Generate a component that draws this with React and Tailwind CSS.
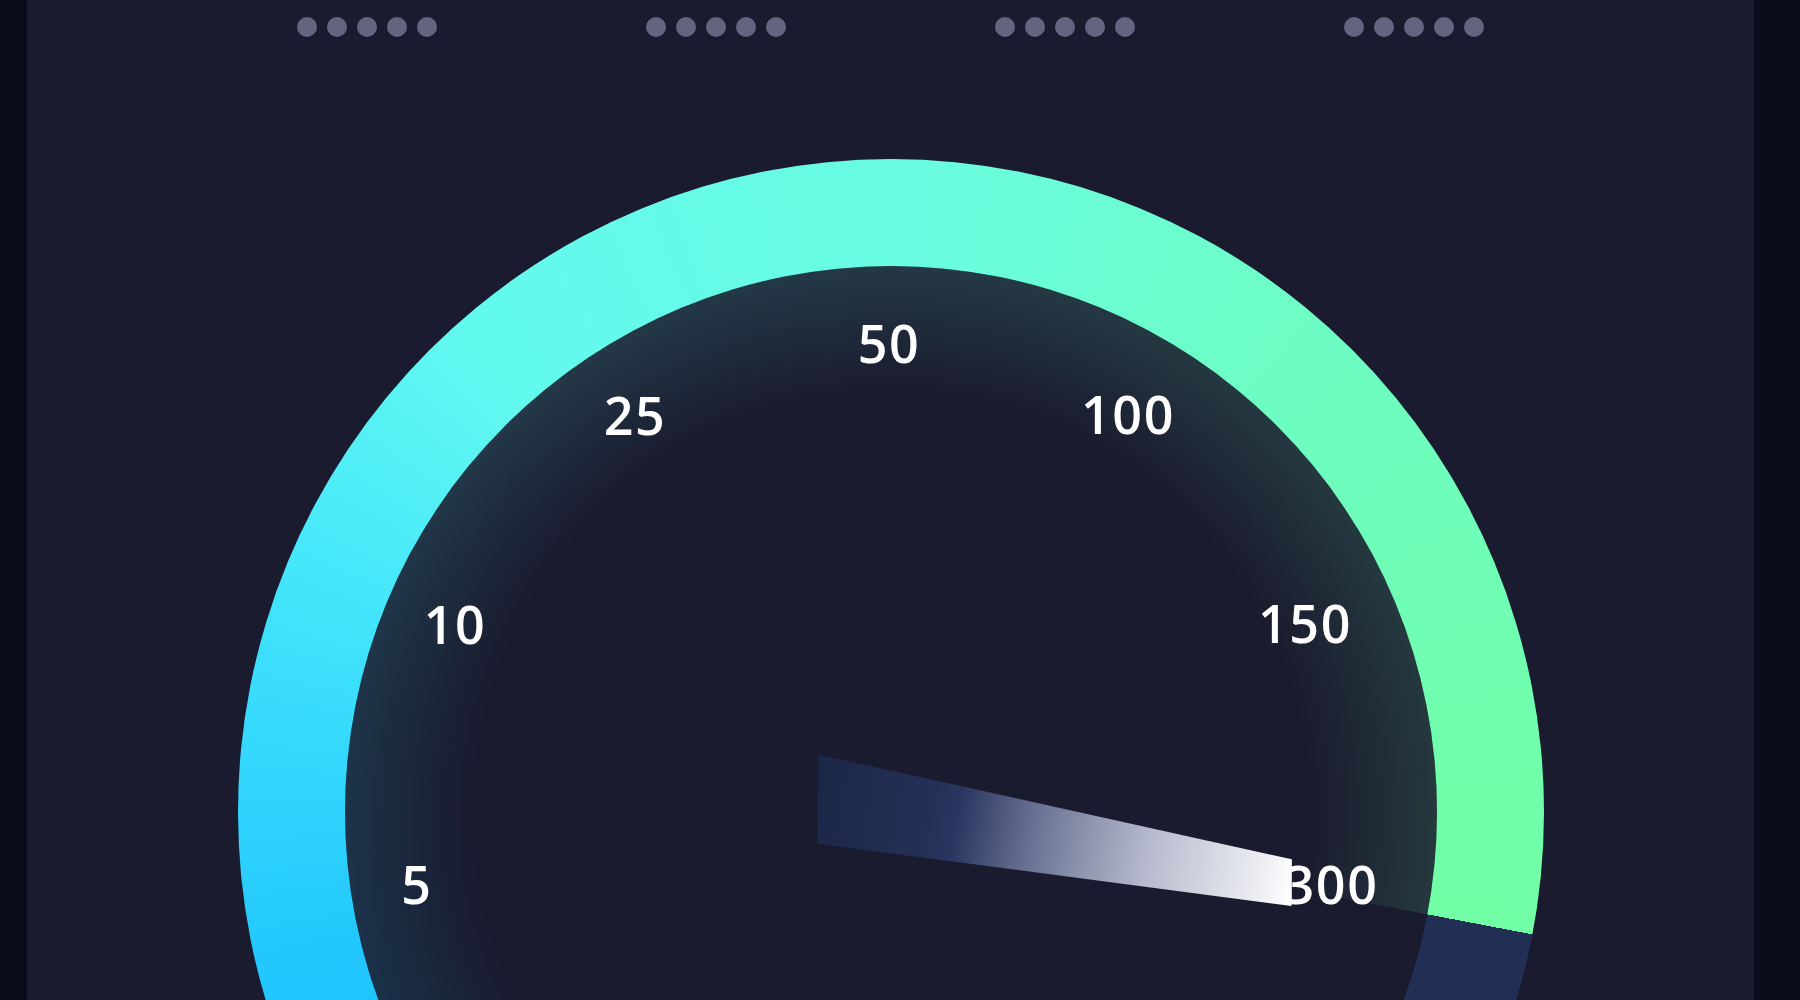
import React from "react";

const labels = [
  { t: "50", x: 651.5, y: 184 },
  { t: "25", x: 397.5, y: 256 },
  { t: "100", x: 890.5, y: 255 },
  { t: "10", x: 217.5, y: 465 },
  { t: "150", x: 1067.5, y: 464 },
  { t: "5", x: 179.5, y: 725 },
  { t: "300", x: 1094, y: 725 },
];

function Dots() {
  return (
    <div className="flex justify-center gap-[10px]">
      {[0, 1, 2, 3, 4].map((i) => (
        <div key={i} className="h-5 w-5 rounded-full bg-[#626480]" />
      ))}
    </div>
  );
}

export default function App() {
  return (
    <div className="flex h-[1000px] w-full overflow-hidden bg-[#0a0c1c]">
      <div className="w-[27px] shrink-0" />
      <div className="flex flex-1 flex-col items-center overflow-hidden bg-[#1a1b2e]">
        <div className="grid w-[1396px] grid-cols-4 pt-[17px]">
          <Dots />
          <Dots />
          <Dots />
          <Dots />
        </div>
        <div className="relative mt-[122px] h-[1306px] w-[1306px] shrink-0">
          <div className="absolute inset-0 rounded-full bg-[conic-gradient(from_180deg,#0ea8ff_0deg,#14b8ff_45deg,#22c8fd_77deg,#44e6fb_112deg,#62f9ef_138deg,#69fce2_180deg,#6dfdc6_218deg,#71fea9_270deg,#72fea5_280.8deg,#222f55_280.8deg,#222f55_360deg)]" />
          <div className="absolute inset-[107px] rounded-full bg-[#1a1b2e]" />
          <div className="absolute inset-[107px] rounded-full opacity-[0.13] bg-[conic-gradient(from_180deg,#0ea8ff_0deg,#14b8ff_45deg,#22c8fd_77deg,#44e6fb_112deg,#60f8f0_138deg,#67fde0_180deg,#6dfdc4_218deg,#71fea8_270deg,#72fea5_280.8deg,transparent_280.8deg,transparent_360deg)] [mask-image:radial-gradient(closest-side,transparent_76%,black_100%)] [-webkit-mask-image:radial-gradient(closest-side,transparent_76%,black_100%)]" />
          {labels.map((l) => (
            <div
              key={l.t}
              className="absolute -translate-x-1/2 -translate-y-1/2 whitespace-nowrap font-['Open_Sans',sans-serif] text-[52px] font-semibold leading-none tracking-[0.03em] text-white"
              style={{ left: l.x, top: l.y }}
            >
              {l.t}
            </div>
          ))}
          <div className="absolute left-[571px] top-[609px] h-[88px] w-[493px] origin-[82px_44px] rotate-[10deg] bg-[linear-gradient(90deg,#1c2747_0%,#233056_24%,#2a3660_30%,#6b7394_46%,#b5b9cc_69%,#eeeff3_93%,#ffffff_100%)] [clip-path:polygon(0_0,485px_21px,493px_67px,15px_100%)]" />
        </div>
      </div>
      <div className="w-[46px] shrink-0" />
    </div>
  );
}
